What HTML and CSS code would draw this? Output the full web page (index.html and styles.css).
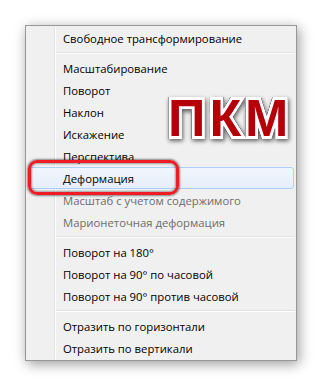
FILE: index.html
```html
<!DOCTYPE html>
<html>
<head>
<meta charset="utf-8">
<link rel="stylesheet" href="styles.css">
</head>
<body>
<div class="stage">
  <div class="menu">
    <div class="item">Свободное трансформирование</div>
    <div class="sep"></div>
    <div class="item">Масштабирование</div>
    <div class="item">Поворот</div>
    <div class="item">Наклон</div>
    <div class="item">Искажение</div>
    <div class="item">Перспектива</div>
    <div class="item hover">Деформация</div>
    <div class="item disabled">Масштаб с учетом содержимого</div>
    <div class="item disabled">Марионеточная деформация</div>
    <div class="sep"></div>
    <div class="item">Поворот на 180°</div>
    <div class="item">Поворот на 90° по часовой</div>
    <div class="item">Поворот на 90° против часовой</div>
    <div class="sep"></div>
    <div class="item">Отразить по горизонтали</div>
    <div class="item">Отразить по вертикали</div>
  </div>
  <div class="mark"></div>
  <div class="pkm">ПКМ</div>
</div>
</body>
</html>
```
FILE: styles.css
```css
html, body {
  margin: 0;
  padding: 0;
  background: #fff;
}
.stage {
  position: relative;
  width: 322px;
  height: 386px;
  padding: 25px 0 0 25px;
  box-sizing: border-box;
}
.menu {
  position: relative;
  width: 272px;
  box-sizing: border-box;
  border: 1px solid #979797;
  background: #f0f0f0;
  padding: 1px 0;
  font-family: "Open Sans", "Noto Sans", sans-serif;
  font-size: 11.3px;
  color: #000;
  box-shadow: 2px 3px 12px rgba(0,0,0,0.4);
}
.menu::before {
  content: "";
  position: absolute;
  top: 1px;
  bottom: 1px;
  left: 28px;
  width: 1px;
  background: #e2e3e3;
  border-right: 1px solid #fff;
}
.item {
  position: relative;
  height: 22px;
  line-height: 21px;
  padding-left: 34px;
  margin: 0 2px;
  border: 1px solid transparent;
  box-sizing: border-box;
  white-space: nowrap;
}
.item.hover {
  border-color: #aecff7;
  border-radius: 3px;
  background: linear-gradient(#f1f6fd, #e6eefa);
}
.item.disabled {
  color: #6d6d6d;
}
.sep {
  height: 8px;
  margin-left: 30px;
  margin-right: 1px;
  position: relative;
}
.sep::after {
  content: "";
  position: absolute;
  left: 0;
  right: 0;
  top: 3px;
  height: 1px;
  background: #e0e0e0;
  border-bottom: 1px solid #fff;
}
.mark {
  position: absolute;
  left: 28px;
  top: 160px;
  width: 151px;
  height: 35px;
  box-sizing: border-box;
  border: 3px solid #ee1c24;
  border-radius: 9px;
  box-shadow: 0 0 2px 1px rgba(0,0,0,0.45), inset 0 0 2px 1px rgba(0,0,0,0.35);
}
.pkm {
  position: absolute;
  left: 168px;
  top: 88px;
  font-family: "Liberation Sans", Arial, sans-serif;
  font-weight: bold;
  font-size: 52px;
  letter-spacing: 4px;
  line-height: 60px;
  color: #b5000a;
  -webkit-text-stroke: 6px #fff;
  paint-order: stroke fill;
  filter: drop-shadow(0 0 0.6px #111) drop-shadow(0 0 0.6px #111) drop-shadow(1px 2px 2px rgba(0,0,0,0.6));
}
```
